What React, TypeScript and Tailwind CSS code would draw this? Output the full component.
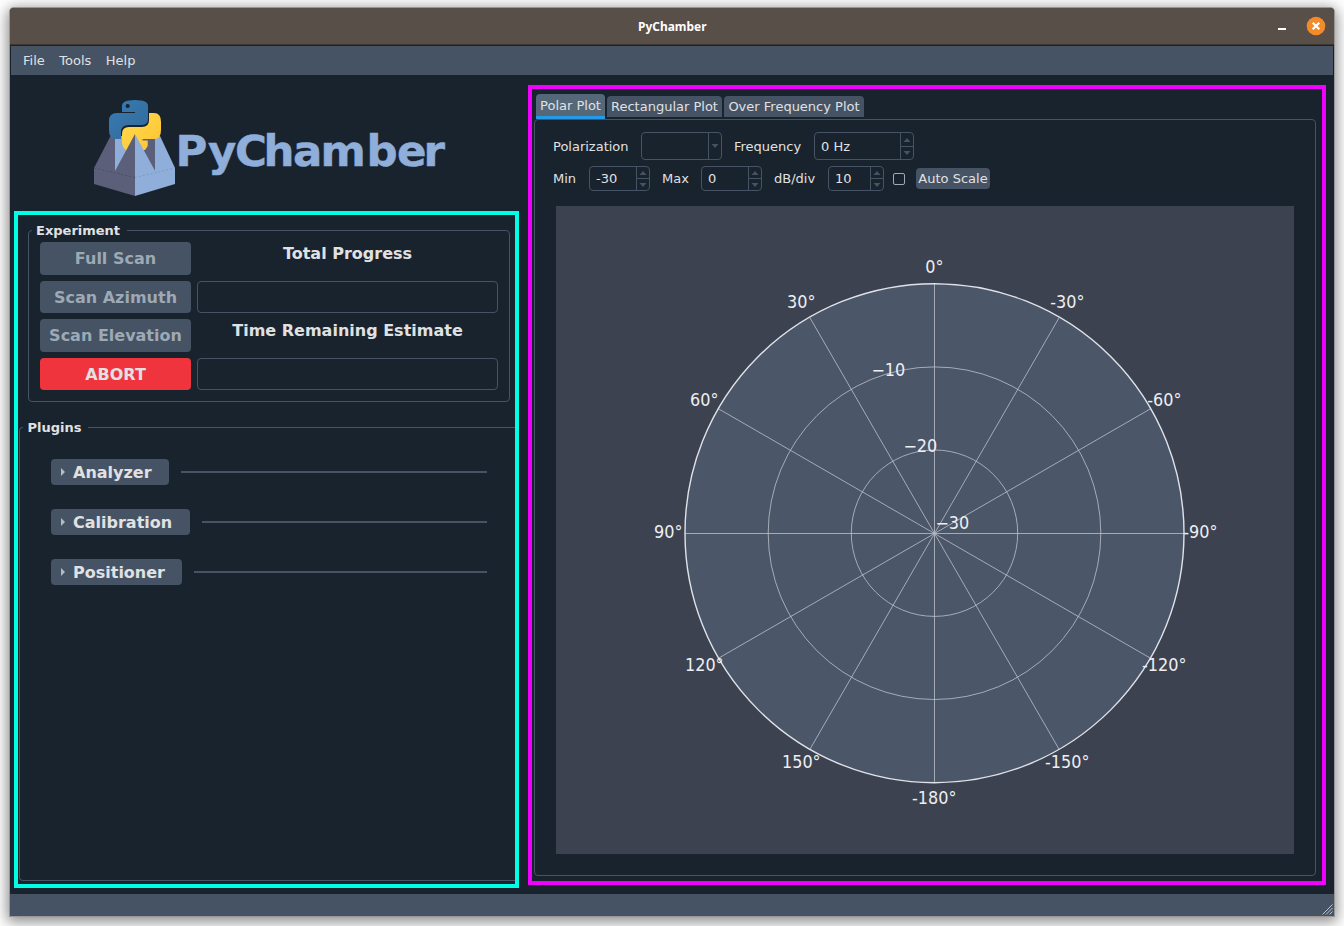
import React from "react";

function Spin({ value, box, tall }: { value: string; box: string; tall?: boolean }) {
  return (
    <div className={`flex rounded-[4px] border border-[#455364] ${box}`}>
      <div className="flex flex-1 items-center pl-[6px]">{value}</div>
      <div className="flex w-[13px] flex-col border-l border-[#455364]">
        <div className="flex flex-1 items-center justify-center border-b border-[#455364]">
          <svg width="8" height="4" viewBox="0 0 8 4"><path d="M0.5 4L4 0L7.5 4Z" fill="#455364" /></svg>
        </div>
        <div className={tall ? "flex h-[12px] items-center justify-center" : "flex h-[11px] items-center justify-center"}>
          <svg width="8" height="4" viewBox="0 0 8 4"><path d="M0.5 0L4 4L7.5 0Z" fill="#455364" /></svg>
        </div>
      </div>
    </div>
  );
}

function Logo() {
  return (
    <svg width="360" height="98" viewBox="93 99 360 98" className="shrink-0">
      <defs>
        <linearGradient id="pb" x1="0" y1="0" x2="1" y2="1"><stop offset="0" stopColor="#3a7cb5" /><stop offset="1" stopColor="#306998" /></linearGradient>
        <linearGradient id="pg" x1="0" y1="0" x2="1" y2="1"><stop offset="0" stopColor="#ffdc50" /><stop offset="1" stopColor="#ffc331" /></linearGradient>
      </defs>
      <path d="M110.500 136L94 168V184L135 196V136Z" fill="#5c5f7a" />
      <path d="M160 136L175 168V184L135 196V136Z" fill="#90aeda" />
      <path d="M115 136H135V171H115Z" fill="#90aeda" />
      <path d="M155 136H143V150L155 171Z" fill="#5c5f7a" />
      <path d="M121 140H122V128H140V140Z" fill="#19232d" />
      <path d="M149 113H154Q161 113 161 122V130Q161 139 154 139H141.500V140.500H147.700V146L145 150H126Q122 147 122 142V134Q122 127 129 127H142Q149 127 149 120Z" fill="url(#pg)" />
      <path d="M122 112V106Q122 100 135 100Q148 100 148 106V119Q148 125 141 125H129Q121 125 121 132V139H116Q109 139 109 130V121Q109 113 117 113H135V112Z" fill="url(#pb)" />
      <circle cx="127.700" cy="106" r="2.100" fill="#19232d" />
      <path d="M135 134L115 171V178L135 184Z" fill="#5c5f7a" />
      <path d="M135 134L155 171V178L135 184Z" fill="#90aeda" />
      <path d="M94 168L135 177.500" stroke="#4b4e66" strokeDasharray="2 2" fill="none" />
      <path d="M135 177.500L175 168" stroke="#7d99c5" strokeDasharray="2 2" fill="none" />
      <text x="175.500 208 235 263.500 293 320.500 366.500 397 423.500" y="166" fill="#90aeda" stroke="#90aeda" strokeWidth="0.500" fontSize="43.500" fontWeight="700" fontFamily="DejaVu Sans, sans-serif">PyChamber</text>
    </svg>
  );
}

const labels: [string, number, number][] = [
  ["0°", 934, 273], ["-30°", 1067, 308], ["-60°", 1164, 406], ["-90°", 1200, 538],
  ["-120°", 1164, 671], ["-150°", 1067, 768], ["-180°", 934, 804], ["150°", 801, 768],
  ["120°", 704, 671], ["90°", 668, 538], ["60°", 704, 406], ["30°", 801, 308],
  ["−10", 888, 376], ["−20", 920, 452], ["−30", 952, 529],
];

function PolarPlot() {
  const spokes = Array.from({ length: 12 }, (_, i) => (i * Math.PI) / 6);
  return (
    <svg width="738" height="648" viewBox="556 206 738 648" className="ml-[21px] mt-[15px] block bg-[#3d4251]">
      <circle cx="934.500" cy="533" r="249.500" fill="#4b5669" />
      <g stroke="#bcc2ca" strokeWidth="0.8" fill="none">
        {spokes.map((a) => (
          <line key={a} x1="934.500" y1="533.500" x2={934.5 + 249.5 * Math.sin(a)} y2={533.5 - 249.5 * Math.cos(a)} />
        ))}
        <circle cx="934.500" cy="533.200" r="83.200" />
        <circle cx="934.500" cy="533.200" r="166.300" />
      </g>
      <circle cx="934.500" cy="533.200" r="249.500" fill="none" stroke="#dfe3e9" strokeWidth="1.400" />
      <g fill="#edeff2" fontSize="17" textAnchor="middle" fontFamily="DejaVu Sans, sans-serif">
        {labels.map(([t, x, y]) => <text key={t + x} transform={`translate(${x + 0.3} ${y - 0.3}) scale(0.945 1)`}>{t}</text>)}
      </g>
    </svg>
  );
}

function Plugin({ name, box }: { name: string; box: string }) {
  return (
    <div className="flex h-[26px] items-center gap-3">
      <div className={`flex h-[26px] items-center rounded-[4px] bg-[#455364] pl-[10px] text-[16px] font-bold ${box}`}>
        <svg width="4" height="8" viewBox="0 0 4 8" className="mr-[8px]"><path d="M0 0L4 4L0 8Z" fill="#b4bcc5" /></svg>
        <span className="pt-[2px]">{name}</span>
      </div>
      <div className="h-[2px] flex-1 bg-[#455364]" />
    </div>
  );
}

export default function App() {
  const scan = "flex items-center justify-center rounded-[4px] bg-[#455364] text-[#9da9b5]";
  return (
    <div className="h-[926px] w-[1344px] overflow-hidden bg-white pl-[10px] pt-[8px] font-['DejaVu_Sans',sans-serif] text-[13px] leading-none text-[#e0e1e3]">
      <div className="flex h-[908px] w-[1324px] flex-col overflow-hidden rounded-t-[4px] bg-[#19232d] shadow-[0_0_0_1px_#989696,0_3px_14px_3px_rgba(0,0,0,0.45)]">
        <header className="flex h-[37px] shrink-0 items-center border-b border-[#3d3631] bg-[#594f49] pr-[8px]">
          <div className="w-[52px]" />
          <div className="flex-1 pl-[7px] text-center font-['Noto_Sans',sans-serif] text-[13px] font-bold text-white">
            <span className="inline-block origin-center scale-x-[0.920]">PyChamber</span>
          </div>
          <svg width="50" height="20" viewBox="0 0 50 20" className="shrink-0">
            <rect x="2" y="12" width="8" height="2" fill="#fff" />
            <circle cx="40" cy="10" r="9.300" fill="#f38b2a" />
            <path d="M36.700 6.700L43.300 13.300M43.300 6.700L36.700 13.300" stroke="#fff" strokeWidth="2.200" />
          </svg>
        </header>
        <nav className="mx-px mt-px flex h-[29px] shrink-0 items-center gap-[14.500px] bg-[#455364] pl-[12px]">
          <span>File</span><span>Tools</span><span>Help</span>
        </nav>
        <main className="flex min-h-0 flex-1 pl-[4px]">
          <section className="flex w-[505px] flex-col">
            <div className="flex h-[136px] pl-[79px] pt-[24px]">
              <Logo />
            </div>
            <div className="flex h-[677px] flex-col border-[4px] border-[#00ffe5] pl-px pt-[15px]">
              <div className="relative ml-[9px] h-[172px] w-[482px] rounded-[4px] border border-[#455364] px-[11px] pt-[11px] text-[16px] font-bold">
                <span className="absolute left-[3px] top-[-7px] bg-[#19232d] pl-[4px] pr-[7px] text-[13px]">Experiment</span>
                <div className="flex gap-[6px]">
                  <div className="flex w-[151px] flex-col">
                    <div className={`h-[33px] ${scan}`}>Full Scan</div>
                    <div className={`mt-[6px] h-[32px] pt-[2px] ${scan}`}>Scan Azimuth</div>
                    <div className={`mt-[6px] h-[33px] ${scan}`}>Scan Elevation</div>
                    <div className="mt-[6px] flex h-[32px] items-center justify-center rounded-[4px] bg-[#ef343d] pt-[2px]">ABORT</div>
                  </div>
                  <div className="flex w-[301px] flex-col text-center">
                    <div className="h-[39px] pt-[4px]">Total Progress</div>
                    <div className="h-[32px] rounded-[4px] border border-[#455364]" />
                    <div className="h-[45px] pt-[10px]">Time Remaining Estimate</div>
                    <div className="h-[32px] rounded-[4px] border border-[#455364]" />
                  </div>
                </div>
              </div>
              <div className="relative mt-[25px] h-[454px] rounded-l-[4px] border border-r-0 border-[#455364] pl-[31px] pr-[28px] pt-[31px]">
                <span className="absolute left-[3px] top-[-7px] bg-[#19232d] pl-[4.500px] pr-[6.500px] font-bold">Plugins</span>
                <div className="flex flex-col gap-6">
                  <Plugin name="Analyzer" box="w-[118px]" />
                  <Plugin name="Calibration" box="w-[139px]" />
                  <Plugin name="Positioner" box="w-[131px]" />
                </div>
              </div>
            </div>
          </section>
          <section className="ml-[9px] mt-[10px] h-[800px] w-[798px] border-[4px] border-[#f000ff] pl-[2px] pt-[5px]">
            <div className="flex h-[25px] items-start gap-[2px] pl-[2px]">
              <div className="flex h-[25px] w-[69px] items-center justify-center rounded-t-[4px] border-b-[3px] border-[#259ae9] bg-[#54687a]">Polar Plot</div>
              <div className="mt-[2px] flex h-[21px] w-[115px] items-center justify-center rounded-t-[4px] bg-[#455364]">Rectangular Plot</div>
              <div className="mt-[2px] flex h-[21px] w-[140px] items-center justify-center rounded-t-[4px] bg-[#455364]">Over Frequency Plot</div>
            </div>
            <div className="h-[757px] w-[782px] rounded-[4px] border border-[#455364]">
              <div className="mt-[12px] flex h-[28px] items-center pl-[18px]">
                <span className="w-[88px]">Polarization</span>
                <div className="flex h-[28px] w-[81px] justify-end rounded-[4px] border border-[#455364]">
                  <div className="flex w-[13px] items-center justify-center border-l border-[#455364]">
                    <svg width="8" height="4" viewBox="0 0 8 4"><path d="M0.5 0L4 4L7.5 0Z" fill="#455364" /></svg>
                  </div>
                </div>
                <span className="ml-[12px] w-[80px]">Frequency</span>
                <Spin value="0 Hz" box="h-[28px] w-[100px]" tall />
              </div>
              <div className="mt-[6px] flex h-[25px] items-center pl-[18px]">
                <span className="w-[36px]">Min</span><Spin value="-30" box="h-[25px] w-[61px]" />
                <span className="ml-[12px] w-[39px]">Max</span><Spin value="0" box="h-[25px] w-[61px]" />
                <span className="ml-[12px] w-[54px]">dB/div</span><Spin value="10" box="h-[25px] w-[56px]" />
                <div className="ml-[9px] h-[12px] w-[12px] rounded-[2px] border border-[#9da9b5]" />
                <div className="ml-[11px] flex h-[21px] w-[74px] items-center justify-center rounded-[4px] bg-[#455364]">Auto Scale</div>
              </div>
              <PolarPlot />
            </div>
          </section>
        </main>
        <footer className="flex h-[22px] shrink-0 items-end justify-end bg-[#455364] pb-px pr-px">
          <svg width="11" height="11" viewBox="0 0 11 11" stroke="#c0c7ce" fill="none"><path d="M0.500 10.500L10.500 0.500M4 10.500L10.500 4M7.500 10.500L10.500 7.500" /></svg>
        </footer>
      </div>
    </div>
  );
}
